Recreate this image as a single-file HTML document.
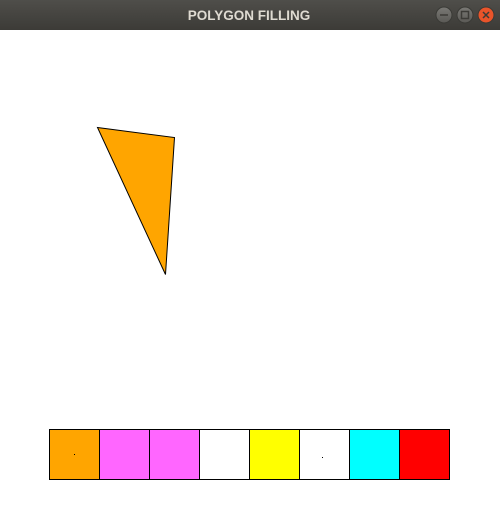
<!DOCTYPE html>
<html><head><meta charset="utf-8"><style>
html,body{margin:0;padding:0;width:500px;height:530px;overflow:hidden;background:#fff}
</style></head><body>
<svg width="500" height="530" xmlns="http://www.w3.org/2000/svg">
<defs><linearGradient id="tb" x1="0" y1="0" x2="0" y2="1"><stop offset="0" stop-color="#4f4e4a"/><stop offset="1" stop-color="#3c3b37"/></linearGradient>
<linearGradient id="bt" x1="0" y1="0" x2="0" y2="1"><stop offset="0" stop-color="#7a7975"/><stop offset="1" stop-color="#5a5955"/></linearGradient></defs>
<rect x="0" y="0" width="500" height="30" fill="url(#tb)"/>
<text x="249" y="20" text-anchor="middle" font-family="Liberation Sans, sans-serif" font-weight="bold" font-size="13.5" fill="#dfdbd2">POLYGON FILLING</text>
<circle cx="444" cy="15" r="8" fill="url(#bt)" stroke="#3a3a36"/>
<line x1="440" y1="15" x2="448" y2="15" stroke="#3c3b37" stroke-width="1.5"/>
<circle cx="465" cy="15" r="8" fill="url(#bt)" stroke="#3a3a36"/>
<rect x="461.5" y="11.5" width="7" height="7" fill="none" stroke="#3c3b37" stroke-width="1.5"/>
<circle cx="486" cy="15" r="8" fill="#e9542a" stroke="#3a3a36"/>
<path d="M483 12L489 18M489 12L483 18" stroke="#3c3b37" stroke-width="1.5"/>
<polygon points="97.5,127.5 174.5,137.5 165.5,274.5" fill="#ffa500" stroke="#000" stroke-width="1"/>
<g stroke="#000" stroke-width="1">
<rect x="49.5" y="429.5" width="50" height="50" fill="#ffa500"/>
<rect x="99.5" y="429.5" width="50" height="50" fill="#ff66ff"/>
<rect x="149.5" y="429.5" width="50" height="50" fill="#ff66ff"/>
<rect x="199.5" y="429.5" width="50" height="50" fill="#fff"/>
<rect x="249.5" y="429.5" width="50" height="50" fill="#ffff00"/>
<rect x="299.5" y="429.5" width="50" height="50" fill="#fff"/>
<rect x="349.5" y="429.5" width="50" height="50" fill="#00ffff"/>
<rect x="399.5" y="429.5" width="50" height="50" fill="#ff0000"/>
</g>
<rect x="74" y="454" width="1" height="1" fill="#000"/>
<rect x="322" y="457" width="1" height="1" fill="#000"/>
</svg>
</body></html>
